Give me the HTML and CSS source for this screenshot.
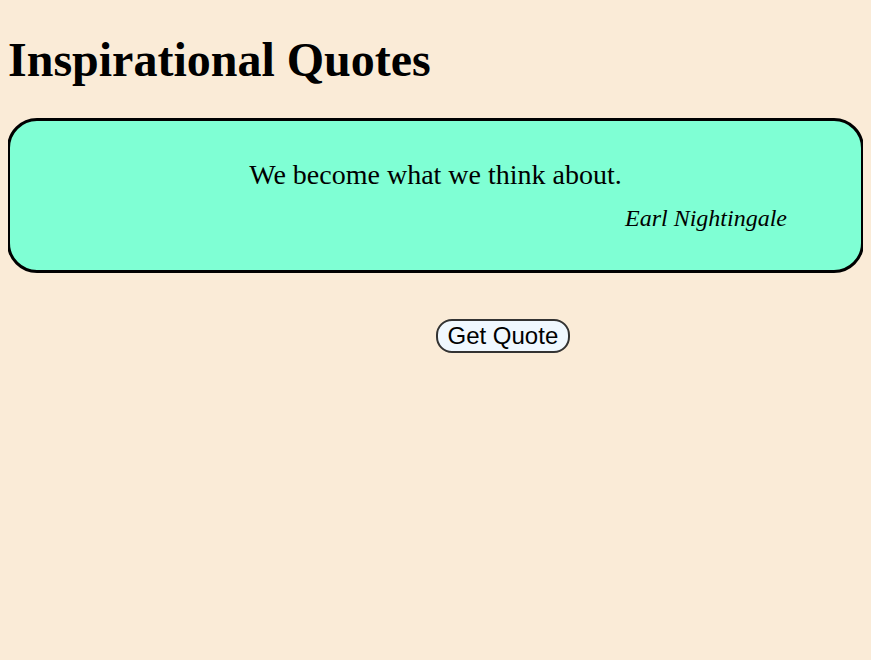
FILE: index.html
```html
<!DOCTYPE html>
<html>
<head>
<meta charset="utf-8">
<title>Inspirational Quotes</title>
<link rel="stylesheet" href="styles.css">
</head>
<body>
<h1 class="title">Inspirational Quotes</h1>
<div class="quote-box">
  <p class="quote-text">We become what we think about.</p>
  <p class="quote-author">Earl Nightingale</p>
</div>
<button class="quote-btn" type="button">Get Quote</button>
</body>
</html>
```
FILE: styles.css
```css
html, body {
  background: #faebd7;
}
body {
  margin: 8px;
  font-family: "Liberation Serif", "Times New Roman", serif;
  color: #000;
}
.title {
  font-size: 48px;
  font-weight: bold;
  margin: 24px 0 31px 0;
}
.quote-box {
  background: #7fffd4;
  border: 3px solid #000;
  border-radius: 30px;
  margin-left: -1px;
  margin-right: -1px;
  padding: 38px 0 38px 0;
}
.quote-text {
  font-size: 28px;
  text-align: center;
  margin: 0 0 14px 0;
}
.quote-author {
  font-size: 24px;
  font-style: italic;
  text-align: right;
  margin: 0 74px 0 0;
}
.quote-btn {
  display: block;
  margin: 46px 0 0 50%;
  font-family: "Liberation Sans", Arial, sans-serif;
  font-size: 24px;
  background: #f0f8ff;
  color: #000;
  border: 2px solid #333;
  border-radius: 16px;
  padding: 1px 10px;
}
```
